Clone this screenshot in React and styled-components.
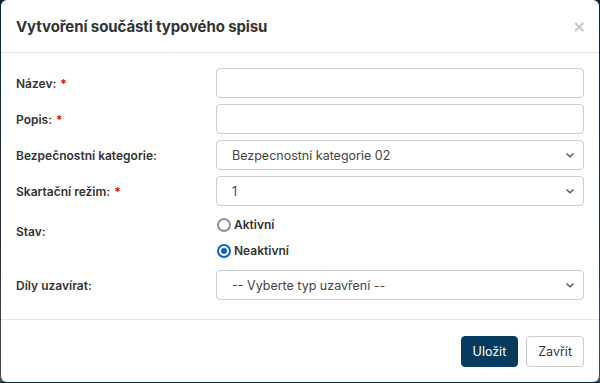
import React from 'react'
import styled, { createGlobalStyle } from 'styled-components'

const Global = createGlobalStyle`
  html, body {
    margin: 0;
    padding: 0;
  }
  body {
    background: linear-gradient(#0c2233, #23303a 60%, #4a4c4e);
    font-family: Inter, "Noto Sans", sans-serif;
    color: #333;
  }
`

const Modal = styled.div`
  box-sizing: border-box;
  width: 598px;
  height: 382px;
  margin: 0 1px 0 1px;
  padding-top: 1px;
  background: #fff;
  border-radius: 6px;
  display: flex;
  flex-direction: column;
`

const Header = styled.div`
  height: 51px;
  padding: 0 15px;
  display: flex;
  align-items: center;
  justify-content: space-between;
  border-bottom: 1px solid #e5e5e5;
`

const Title = styled.h4`
  margin: 0;
  font-size: 15px;
  font-weight: 700;
  color: #333;
  letter-spacing: -0.1px;
`

const Close = styled.button`
  border: 0;
  background: none;
  padding: 0;
  margin-right: -2px;
  color: #c4c4c4;
  font-size: 16px;
  font-weight: 700;
  line-height: 1;
  font-family: "DejaVu Sans", sans-serif;
`

const Body = styled.div`
  flex: 1;
  padding: 15px 15px 0 15px;
  display: grid;
  grid-template-columns: 200px 1fr;
  grid-auto-rows: min-content;
  row-gap: 6px;
  border-bottom: 1px solid #e5e5e5;
`

const Label = styled.label`
  font-size: 12px;
  font-weight: 600;
  color: #333;
  display: flex;
  align-items: ${p => (p.top ? 'flex-start' : 'center')};
  padding-top: ${p => (p.top ? '12px' : '0')};
`

const Star = styled.span`
  color: #e00;
  margin-left: 4px;
`

const Field = styled.div`
  box-sizing: border-box;
  height: 30px;
  border: 1px solid #ccc;
  border-radius: 4px;
  display: flex;
  align-items: center;
  justify-content: space-between;
  padding: 0 8px 0 15px;
  font-size: 12.5px;
  color: #444;
`

const Chevron = () => (
  <svg width="10" height="10" viewBox="0 0 10 10">
    <path d="M1.5 3.5 L5 6.8 L8.5 3.5" fill="none" stroke="#555" strokeWidth="1.4" />
  </svg>
)

const Radios = styled.div`
  display: flex;
  flex-direction: column;
  gap: 7px;
  padding: 3px 0 4px;
`

const RadioRow = styled.div`
  display: flex;
  align-items: center;
  gap: 3px;
  height: 19px;
  font-size: 12px;
  font-weight: 600;
  color: #333;
`

const Dot = styled.span`
  box-sizing: border-box;
  width: 14px;
  height: 14px;
  border-radius: 50%;
  margin-left: 1px;
  border: ${p => (p.checked ? '2px solid #0b63ce' : '2px solid #8f8f9d')};
  display: flex;
  align-items: center;
  justify-content: center;
  &::after {
    content: '';
    width: 6px;
    height: 6px;
    border-radius: 50%;
    background: ${p => (p.checked ? '#0b63ce' : 'transparent')};
  }
`

const Footer = styled.div`
  height: 62px;
  padding: 0 15px;
  display: flex;
  align-items: center;
  justify-content: flex-end;
  gap: 8px;
`

const Button = styled.button`
  box-sizing: border-box;
  height: 31px;
  padding: 0 11px;
  border-radius: 4px;
  font-family: Inter, "Noto Sans", sans-serif;
  font-size: 12.5px;
  border: 1px solid ${p => (p.primary ? '#063a5e' : '#ccc')};
  background: ${p => (p.primary ? '#063a5e' : '#fff')};
  color: ${p => (p.primary ? '#fff' : '#333')};
`

const Row = ({ label, required, children, top }) => (
  <>
    <Label top={top}>
      {label}
      {required && <Star>*</Star>}
    </Label>
    {children}
  </>
)

export default function App() {
  return (
    <>
      <Global />
      <Modal>
        <Header>
          <Title>Vytvoření součásti typového spisu</Title>
          <Close>×</Close>
        </Header>
        <Body>
          <Row label="Název:" required>
            <Field />
          </Row>
          <Row label="Popis:" required>
            <Field />
          </Row>
          <Row label="Bezpečnostní kategorie:">
            <Field>
              Bezpecnostni kategorie 02
              <Chevron />
            </Field>
          </Row>
          <Row label="Skartační režim:" required>
            <Field>
              1
              <Chevron />
            </Field>
          </Row>
          <Row label="Stav:" top>
            <Radios>
              <RadioRow>
                <Dot />
                Aktivní
              </RadioRow>
              <RadioRow>
                <Dot checked />
                Neaktivní
              </RadioRow>
            </Radios>
          </Row>
          <Row label="Díly uzavírat:">
            <Field>
              -- Vyberte typ uzavření --
              <Chevron />
            </Field>
          </Row>
        </Body>
        <Footer>
          <Button primary>Uložit</Button>
          <Button>Zavřít</Button>
        </Footer>
      </Modal>
    </>
  )
}
